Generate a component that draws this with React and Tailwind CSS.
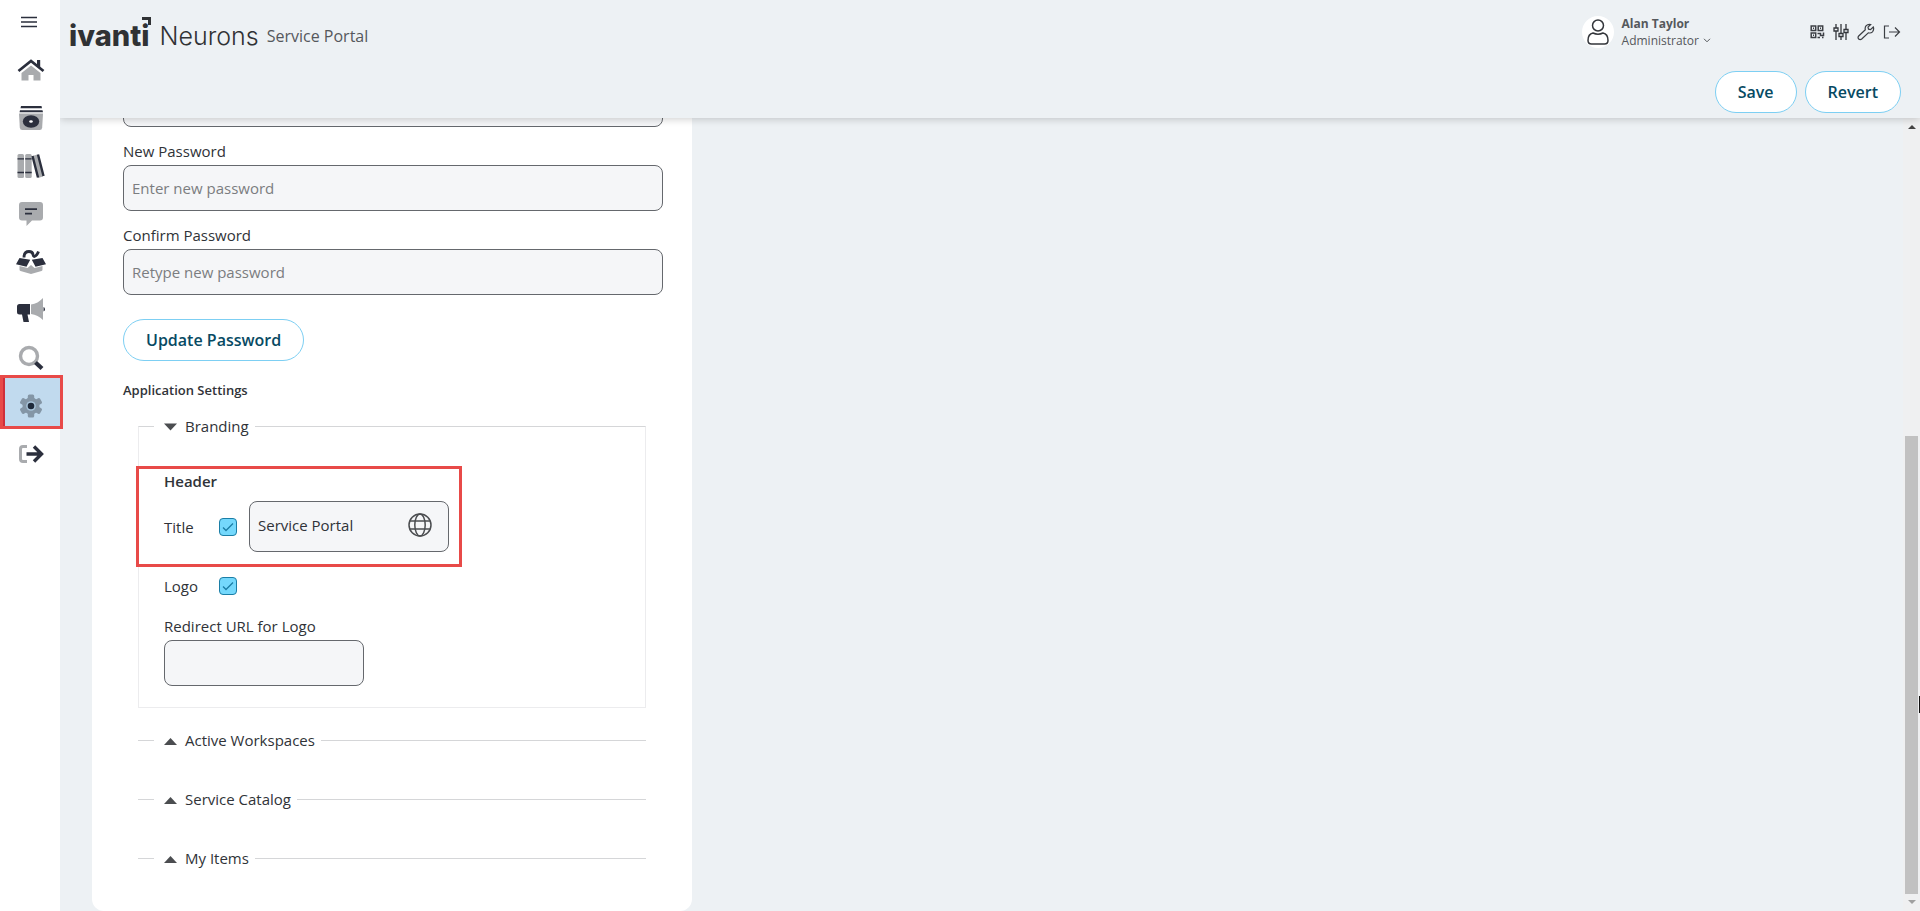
import React, { useState } from "react";

const HomeIcon = () => (
  <svg viewBox="0 0 28 28" className="size-7">
    <path d="M14 9.500 4.500 17V24.500h7V19h5v5.500h7V17z" fill="#a9abae" />
    <path d="M1.500 15 14 5l12.500 10" fill="none" stroke="#2b2f3d" strokeWidth="2.800" />
    <path d="M20 4h3.200v9L20 10z" fill="#2b2f3d" />
  </svg>
);

const CatalogIcon = () => (
  <svg viewBox="0 0 28 28" className="size-7">
    <path d="M4 2h20.500l.5 2.200H3.500zM3 6.200h22.500l.5 2H2.500z" fill="#2b2f3d" />
    <path d="M2 9.500h24l-.8 14q-.2 2.500-2.500 2.500H5.300q-2.300 0-2.500-2.500z" fill="#a9abae" />
    <ellipse cx="14" cy="17.500" rx="8.200" ry="6.200" fill="#2b2f3d" />
    <ellipse cx="14" cy="17.500" rx="1.800" ry="1.300" fill="#fff" />
  </svg>
);

const BooksIcon = () => (
  <svg viewBox="0 0 28 28" className="size-7">
    <rect x="0.500" y="2" width="6.500" height="24" rx="1.500" fill="#a9abae" />
    <rect x="8.200" y="2" width="6.500" height="24" rx="1.500" fill="#a9abae" />
    <path d="M.5 6.200H7v1.400H.5zM8.200 6.200h6.500v1.400H8.200zM.5 19.800H7v1.400H.5zM8.200 19.800h6.500v1.400H8.200z" fill="#2b2f3d" />
    <path d="m15.500 4 5-1.500 5.500 22-5 1.500z" fill="#a9abae" />
    <path d="m15.500 4 5.500 21.500M21 2.500l5.500 21.500" stroke="#2b2f3d" strokeWidth="2.400" />
  </svg>
);

const ChatIcon = () => (
  <svg viewBox="0 0 28 28" className="size-7">
    <path d="M5 2h18q3 0 3 3v12.500q0 3-3 3h-8L9.500 26v-5.500H5q-3 0-3-3V5q0-3 3-3z" fill="#a9abae" />
    <path d="M8 9.200h12M8 13.700h7" stroke="#2b2f3d" strokeWidth="1.800" />
  </svg>
);

const BoxIcon = () => (
  <svg viewBox="0 0 30 28" className="h-7 w-[30px]">
    <path d="m3.500 18 8 2 3.500-3 3.500 3 8-2v3.500q0 1-1 1.500L15 26 4.500 23q-1-.5-1-1.500z" fill="#a9abae" />
    <path d="m3.500 10 10.700 1.800-3.700 7-10.500-2.500zM26.500 10l-10.700 1.800 3.700 7 10.500-2.500z" fill="#2b2f3d" />
    <path d="M8 9.500q0-6 5-6 3.500 0 4 3t2.500 1.500 3-4.500" fill="none" stroke="#2b2f3d" strokeWidth="2.800" />
  </svg>
);

const MegaphoneIcon = () => (
  <svg viewBox="0 0 28 28" className="size-7">
    <path d="M14 8.500q7-1 12-6.500v22q-5-5-12-6z" fill="#a9abae" />
    <path d="M2.500 8H13v10.500h-2.500L12 26H6.500L5 18.500H2.500Q0 18.500 0 16v-5.500Q0 8 2.500 8z" fill="#2b2f3d" />
    <path d="M26.500 11q1.500.5 1.500 2.200t-1.500 2.300z" fill="#2b2f3d" />
  </svg>
);

const SearchIcon = () => (
  <svg viewBox="0 0 28 28" className="size-7">
    <circle cx="12" cy="12" r="8.500" fill="none" stroke="#a9abae" strokeWidth="3.400" />
    <path d="m18.500 18.500 6.500 6" stroke="#2b2f3d" strokeWidth="4.200" />
  </svg>
);

const GearIcon = () => (
  <svg viewBox="0 0 28 28" className="size-7">
    <g fill="#8496a6">
      <circle cx="14" cy="14" r="8.500" />
      <rect x="10.800" y="2.500" width="6.400" height="23" rx="1.500" />
      <rect x="10.800" y="2.500" width="6.400" height="23" rx="1.500" transform="rotate(60 14 14)" />
      <rect x="10.800" y="2.500" width="6.400" height="23" rx="1.500" transform="rotate(120 14 14)" />
    </g>
    <circle cx="14" cy="14" r="4.800" fill="#a8c4da" />
    <circle cx="14" cy="14" r="3.300" fill="#1f2a3a" />
  </svg>
);

const ExitIcon = () => (
  <svg viewBox="0 0 28 28" className="size-7">
    <path d="M10 6.500H6Q3.500 6.500 3.500 9v10q0 2.500 2.500 2.500h4" fill="none" stroke="#a9abae" strokeWidth="3" />
    <path d="M9.500 14H25M17 6.500l7.500 7.500-7.500 7.500" fill="none" stroke="#2b2f3d" strokeWidth="3.400" />
  </svg>
);

const navItems = [
  { label: "Home", Icon: HomeIcon },
  { label: "Service Catalog", Icon: CatalogIcon },
  { label: "Knowledge", Icon: BooksIcon },
  { label: "Messages", Icon: ChatIcon },
  { label: "My Items", Icon: BoxIcon },
  { label: "Announcements", Icon: MegaphoneIcon },
  { label: "Search", Icon: SearchIcon },
  { label: "Settings", Icon: GearIcon, active: true },
  { label: "Log out", Icon: ExitIcon },
];

function Sidebar() {
  return (
    <nav className="relative z-20 flex w-[60px] shrink-0 flex-col bg-white">
      <button type="button" aria-label="Menu" className="flex h-[46px] items-center pl-[21px]">
        <svg viewBox="0 0 16 12" className="mb-[2px] h-3 w-4">
          <path d="M0 1.500h16M0 6h16M0 10.500h16" stroke="#2b2f3d" strokeWidth="1.500" />
        </svg>
      </button>
      {navItems.map(({ label, Icon, active }) => (
        <a
          key={label}
          href="#"
          aria-label={label}
          className="relative flex h-12 items-center justify-center pl-[2px]"
        >
          {active && (
            <span className="pointer-events-none absolute -top-[7px] -right-[3px] bottom-px left-0 border-[3px] border-[#e84a48] bg-[#c1daee]">
              <span className="block h-full w-[2px] bg-[#cf2f3a]" />
            </span>
          )}
          <span className="relative">
            <Icon />
          </span>
        </a>
      ))}
    </nav>
  );
}

const iconStroke = { fill: "none", stroke: "#3c3f44", strokeWidth: 1.2 };

function Header() {
  return (
    <header className="relative z-10 flex h-[118px] shrink-0 flex-col bg-[#edf1f4] shadow-[0_1px_8px_rgba(0,0,0,0.2)]">
      <div className="flex h-[71px] items-start pr-[19px] pl-[9px]">
        <div className="relative mt-[18px] flex items-center text-[#303234]">
          <span className="font-['Inter',sans-serif] text-[29px] leading-9 font-extrabold">ivanti</span>
          <svg viewBox="0 0 10 10" className="absolute -top-px left-[73px] size-[10px]">
            <path d="M0 0h9v8H6V3H0z" fill="#303234" />
          </svg>
          <span className="ml-[10px] font-['Inter',sans-serif] text-[25px] leading-9 font-light">Neurons</span>
          <span className="ml-2 text-base text-[#55585c]">Service Portal</span>
        </div>
        <div className="mt-[15px] ml-auto flex items-center">
          <span className="flex size-8 items-center justify-center rounded-full bg-white">
            <svg viewBox="0 0 22 26" className="h-[26px] w-[22px]" fill="none" stroke="#33363b" strokeWidth="1.500">
              <circle cx="11" cy="6.500" r="5.500" />
              <path d="M6 14q5 2.500 10 0 5 1 5 7.500 0 3.500-3.500 3.500h-13Q1 25 1 21.500 1 15 6 14z" />
            </svg>
          </span>
          <button type="button" className="ml-2 text-left text-xs leading-[17px] text-[#55585c]">
            <span className="block font-bold">Alan Taylor</span>
            <span className="flex items-center gap-1">
              Administrator
              <svg viewBox="0 0 8 5" className="h-[5px] w-2" fill="none" stroke="#55585c">
                <path d="m1 .8 3 3 3-3" />
              </svg>
            </span>
          </button>
          <div className="ml-[98px] flex items-center gap-2">
            <button type="button" aria-label="QR code">
              <svg viewBox="0 0 16 16" className="size-4" fill="none" stroke="#3c3f44" strokeWidth="1.500">
                <path d="M2.200 2h4.500v4.500H2.200zM9.200 2h4.500v4.500H9.200zM2.200 9h4.500v4.500H2.200zM4 4.200h1M11 4.200h1M4 11.200h1M8.500 9.500h3v2h3V8.500M8.500 13.500h2.500M13 13.500h1.500" />
              </svg>
            </button>
            <button type="button" aria-label="Preferences">
              <svg viewBox="0 0 16 16" className="size-4" fill="none" stroke="#33363b" strokeWidth="1.300">
                <path d="M3 0v4M3 7v9M8 0v9.500M8 12.500V16M13 0v5.500M13 8.500V16M1 4h4v3H1zM6 9.500h4v3H6zM11 5.500h4v3h-4z" />
              </svg>
            </button>
            <button type="button" aria-label="Tools">
              <svg viewBox="0 0 18 18" className="size-[18px]" {...iconStroke}>
                <path d="M16.300 4 13.500 6.700l-2-.5-.5-2L13.700 1.500Q11 .8 9.200 2.700 7.700 4.500 8.300 6.800L1.700 13q-1.300 1.500 0 3 1.500 1.300 3 0l6.600-6.200q2.500.7 4.200-1Q17.300 6.700 16.300 4z" />
              </svg>
            </button>
            <button type="button" aria-label="Sign out">
              <svg viewBox="0 0 18 16" className="h-4 w-[18px]" {...iconStroke}>
                <path d="M6 2H1.500v12H6M6 8h10.500M12 3.500 16.500 8 12 12.500" />
              </svg>
            </button>
          </div>
        </div>
      </div>
      <div className="flex justify-end gap-2 pr-[19px]">
        <PillButton>Save</PillButton>
        <PillButton>Revert</PillButton>
      </div>
    </header>
  );
}

function PillButton({ children }) {
  return (
    <button
      type="button"
      className="h-[42px] rounded-full border border-[#7dcff3] bg-white px-[22px] text-base font-semibold text-[#074a63]"
    >
      {children}
    </button>
  );
}

const inputClass =
  "block h-[46px] w-full rounded-lg border border-[#65686d] bg-[#f5f6f8] px-2 text-[15px] text-[#303338] placeholder:text-[#7b7d80]";

function PasswordField({ id, label, placeholder }) {
  return (
    <div className="mb-[14px]">
      <label htmlFor={id} className="mb-1 block">{label}</label>
      <input id={id} type="password" placeholder={placeholder} className={inputClass} />
    </div>
  );
}

function Legend({ open, onClick, children }) {
  return (
    <legend className="ml-[15px] h-5 pr-[6px] pl-[10px]">
      <button type="button" aria-expanded={open} onClick={onClick} className="flex items-center gap-2">
        <svg viewBox="0 0 13 9" className="h-[9px] w-[13px]" fill="#4b4d50">
          <path d={open ? "M0 1.500h13L6.500 8.500z" : "M0 9h13L6.500 2z"} />
        </svg>
        {children}
      </button>
    </legend>
  );
}

function CheckBox({ id }) {
  return (
    <span className="relative flex size-[18px]">
      <input
        id={id}
        type="checkbox"
        defaultChecked
        className="peer size-[18px] appearance-none rounded border border-[#1b7ea6] bg-white checked:bg-[#74d8fc]"
      />
      <svg
        viewBox="0 0 18 18"
        className="pointer-events-none absolute inset-0 hidden size-[18px] peer-checked:block"
        fill="none"
        stroke="#1b7ea6"
        strokeWidth="1.300"
      >
        <path d="m4 9.500 3 3L14 5.500" />
      </svg>
    </span>
  );
}

function Branding() {
  return (
    <div className="pt-[35px] pb-[21px] pl-[25px]">
      <div className="relative">
        <span className="pointer-events-none absolute -top-[5px] -left-7 h-[101px] w-[326px] border-[3px] border-[#e84a48]" />
        <h3 className="font-semibold">Header</h3>
        <div className="mt-[10px] flex items-center">
          <label htmlFor="title-on" className="w-[55px]">Title</label>
          <CheckBox id="title-on" />
          <div className="ml-3 flex h-[51px] w-[200px] items-center rounded-lg border border-[#65686d] bg-[#f5f6f8] pr-4 pb-1 pl-2">
            <input aria-label="Title text" defaultValue="Service Portal" className="min-w-0 flex-1 bg-transparent" />
            <button type="button" aria-label="Translations">
              <svg viewBox="0 0 24 24" className="size-6" fill="none" stroke="#4b4d50" strokeWidth="1.500">
                <circle cx="12" cy="12" r="11" />
                <ellipse cx="12" cy="12" rx="5.200" ry="11" />
                <path d="M2 8h20M2 16h20" />
              </svg>
            </button>
          </div>
        </div>
      </div>
      <div className="mt-6 flex items-center">
        <label htmlFor="logo-on" className="w-[55px]">Logo</label>
        <CheckBox id="logo-on" />
      </div>
      <div className="mt-5 w-[200px]">
        <label htmlFor="logo-url" className="mb-1 block">Redirect URL for Logo</label>
        <input id="logo-url" type="text" className={inputClass} />
      </div>
    </div>
  );
}

function SettingsCard() {
  const [open, setOpen] = useState(true);
  return (
    <section className="ml-8 w-[600px] rounded-b-xl bg-white pt-6 pr-[29px] pb-[43px] pl-[31px] text-[15px] leading-5 text-[#303338]">
      <div className="mb-[14px]">
        <input type="password" aria-label="Current password" className={inputClass} />
      </div>
      <PasswordField id="new" label="New Password" placeholder="Enter new password" />
      <PasswordField id="confirm" label="Confirm Password" placeholder="Retype new password" />
      <div className="mt-6">
        <PillButton>Update Password</PillButton>
      </div>
      <h2 className="mt-[19px] mb-4 text-[13px] leading-5 font-semibold">Application Settings</h2>
      <div className="mr-[17px] ml-[15px]">
        <fieldset className="border border-[#ececee] border-t-[#d5d6d8]">
          <Legend open={open} onClick={() => setOpen(!open)}>Branding</Legend>
          {open && <Branding />}
        </fieldset>
        <div className="mt-[22px] flex flex-col gap-[39px]">
          {["Active Workspaces", "Service Catalog", "My Items"].map((name) => (
            <fieldset key={name} className="border-t border-[#d5d6d8] pl-px">
              <Legend open={false}>{name}</Legend>
            </fieldset>
          ))}
        </div>
      </div>
    </section>
  );
}

function ScrollBar() {
  return (
    <div aria-hidden="true" className="ml-auto flex w-[17px] flex-col items-center self-stretch bg-[#eff0f1]">
      <svg viewBox="0 0 8 4" className="mt-[7px] h-1 w-2" fill="#444">
        <path d="M0 4h8L4 0z" />
      </svg>
      <div className="flex-[307]" />
      <div className="w-[13px] flex-[458] bg-[#c1c1c1]" />
      <svg viewBox="0 0 8 4" className="mt-[6px] mb-[7px] h-1 w-2" fill="#a0a0a0">
        <path d="M0 0h8L4 4z" />
      </svg>
    </div>
  );
}

export default function App() {
  return (
    <div className="flex h-screen bg-[#edf1f4] font-['Open_Sans','Noto_Sans',sans-serif]">
      <Sidebar />
      <div className="flex min-w-0 flex-1 flex-col">
        <Header />
        <main className="flex min-h-0 flex-1 items-end overflow-hidden">
          <SettingsCard />
          <ScrollBar />
        </main>
      </div>
      <svg viewBox="0 0 1 17" className="pointer-events-none absolute top-[696px] right-0 h-[17px] w-px">
        <path d="M0 0h1v17H0z" fill="#111" />
      </svg>
    </div>
  );
}
